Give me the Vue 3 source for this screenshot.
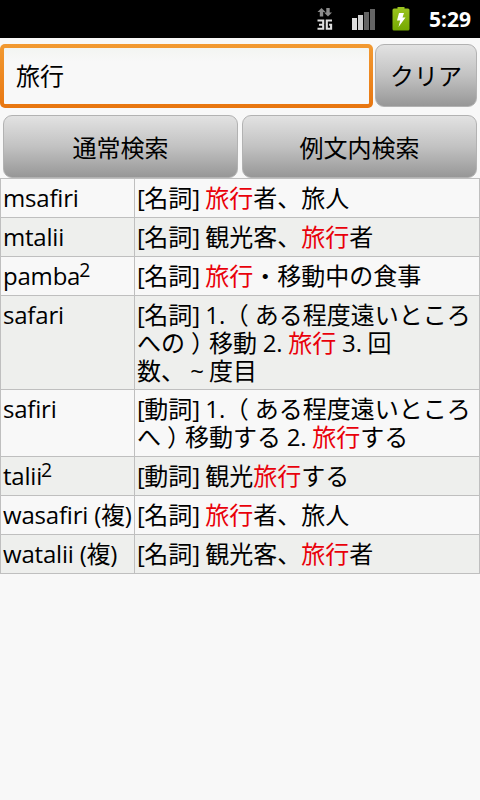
<template>
    <div class="screen">
        <header class="status-bar">
            <svg class="network" width="16" height="22" viewBox="0 0 16 22">
                <path
                    d="M4.500 0L8.500 4H6.200V8.500H2.800V4H.5ZM9.300 0h3.400v4.500H15L11 8.500 7 4.500h2.300Z"
                    fill="#8c8c8c"
                />
                <path
                    d="M.5 12.500h5.700v3.500l-.8 .8 .8 .8v3.200H.5M2 16.700h3.500M15 12.500H9.800v8.300h4.300v-4h-2"
                    fill="none"
                    stroke="#dedede"
                    stroke-width="2.100"
                />
            </svg>
            <svg class="signal" width="24" height="22" viewBox="0 0 24 22">
                <path d="M0 10h5v12H0z" fill="#dedede" />
                <path d="M6 7h5v15H6z" fill="#cfcfcf" />
                <path d="M12 4h5v18h-5zM18 1h5v21h-5z" fill="#646464" />
            </svg>
            <svg class="battery" width="18" height="26" viewBox="0 0 18 26">
                <defs>
                    <linearGradient id="charge" x1="0" y1="0" x2="0" y2="1">
                        <stop offset="0" stop-color="#9cc420" />
                        <stop offset="1" stop-color="#74a800" />
                    </linearGradient>
                </defs>
                <path
                    d="M5.500 2.500V1h7v1.500h3.500q1.500 0 1.500 1.500v19q0 1.500-1.500 1.500H2Q.5 24.500.5 23V4Q.5 2.500 2 2.500Z"
                    fill="url(#charge)"
                />
                <path d="M7 7h5l-1.500 4.500h3L6.500 21l1.700-6.500H5Z" fill="#fff" />
            </svg>
            <span class="clock">5:29</span>
        </header>

        <div class="search-row">
            <input v-model="query" class="query" type="text" />
            <button class="btn clear" @click="query = ''">クリア</button>
        </div>
        <div class="button-row">
            <button class="btn">通常検索</button>
            <button class="btn">例文内検索</button>
        </div>

        <table class="results">
            <tbody>
                <tr v-for="(row, i) in rows" :key="i" :class="'lines-' + row.lines.length">
                    <td class="word">
                        {{ row.word }}<sup v-if="row.sup">{{ row.sup }}</sup>
                    </td>
                    <td class="meaning">
                        <div v-for="(line, n) in row.lines" :key="n" class="line">
                            <span
                                v-for="(part, p) in split(line)"
                                :key="p"
                                :class="partClass(part)"
                            >{{ part }}</span>
                        </div>
                    </td>
                </tr>
            </tbody>
        </table>
    </div>
</template>

<script setup>
import { ref } from "vue";

const query = ref("旅行");
const keyword = "旅行";

const rows = [
    { word: "msafiri", lines: ["[名詞] 旅行者、旅人"] },
    { word: "mtalii", lines: ["[名詞] 観光客、旅行者"] },
    { word: "pamba", sup: "2", lines: ["[名詞] 旅行・移動中の食事"] },
    {
        word: "safari",
        lines: ["[名詞] 1. （ある程度遠いところ", "への）移動 2. 旅行 3. 回", "数、~度目"],
    },
    { word: "safiri", lines: ["[動詞] 1. （ある程度遠いところ", "へ）移動する 2. 旅行する"] },
    { word: "talii", sup: "2", lines: ["[動詞] 観光旅行する"] },
    { word: "wasafiri (複)", lines: ["[名詞] 旅行者、旅人"] },
    { word: "watalii (複)", lines: ["[名詞] 観光客、旅行者"] },
];

// Separa la palabra buscada, los corchetes y los signos de ancho completo
const split = (line) => line.split(/(旅行|[（）~[\]])/).filter((s) => s !== "");

const partClass = (part) => {
    if (part === keyword) return "hit";
    if (part === "[" || part === "]") return "bracket";
    return /^[（）~]$/.test(part) ? "wide" : "";
};
</script>

<style>
body {
    margin: 0;
    background: #f8f8f8;
}
</style>

<style scoped>
.screen {
    width: 480px;
    height: 800px;
    overflow: hidden;
    background: #f8f8f8;
    color: #000;
    font-family: "Open Sans", "Noto Sans CJK JP", sans-serif;
    font-size: 24px;
}
.status-bar {
    display: flex;
    align-items: center;
    justify-content: flex-end;
    box-sizing: border-box;
    height: 38px;
    padding-right: 9px;
    background: #000;
}
.network {
    margin-right: 19px;
}
.signal {
    margin-right: 16px;
}
.battery {
    width: 18px;
}
.clock {
    width: 61px;
    color: #fff;
    font-size: 21px;
    font-weight: 700;
    line-height: 38px;
    text-align: right;
}
.search-row {
    display: flex;
    gap: 2px;
    height: 64px;
    padding: 6px 3px 0 0;
}
.query {
    box-sizing: border-box;
    width: 373px;
    height: 64px;
    padding: 0 12px 3px 12px;
    border: 4px solid transparent;
    border-radius: 5px;
    outline: none;
    background:
        linear-gradient(#f3f5f2, #f8f8f8 14px) padding-box,
        linear-gradient(#f29a32, #e87610) border-box;
    color: #000;
    font: inherit;
}
.btn {
    flex: 1;
    box-sizing: border-box;
    height: 63px;
    padding: 0 0 1px;
    border: 1px solid #b2b2b2;
    border-radius: 9px;
    background: linear-gradient(#e2e2e2, #c2c2c2 50%, #979797);
    color: #000;
    font: inherit;
}
.clear {
    padding-bottom: 2px;
}
.button-row {
    display: flex;
    gap: 4px;
    height: 63px;
    padding: 7px 3px 0;
}
.results {
    width: 480px;
    border-collapse: separate;
    border-spacing: 0;
    table-layout: fixed;
    border-top: 1px solid #bfbfbf;
    border-left: 1px solid #bfbfbf;
    box-sizing: border-box;
}
.results tr {
    height: 39px;
}
.results tr.lines-2 {
    height: 67px;
}
.results tr.lines-3 {
    height: 94px;
}
.results tr:nth-child(even) {
    background: #eeefed;
}
.results td {
    box-sizing: border-box;
    padding: 5px 0 0 2px;
    border-right: 1px solid #bfbfbf;
    border-bottom: 1px solid #bfbfbf;
    line-height: 28px;
    vertical-align: top;
    white-space: nowrap;
}
.results .word {
    width: 134px;
    letter-spacing: -0.2px;
}
.line {
    height: 28px;
    white-space: pre;
    word-spacing: -0.6px;
}
.bracket {
    letter-spacing: -0.6px;
}
.hit {
    color: #e9000a;
}
.wide {
    display: inline-block;
    width: 24px;
    text-align: center;
    font-feature-settings: "halt";
}
sup {
    margin-left: -1px;
    font-size: 19.5px;
    line-height: 0;
    vertical-align: 8px;
}
</style>
